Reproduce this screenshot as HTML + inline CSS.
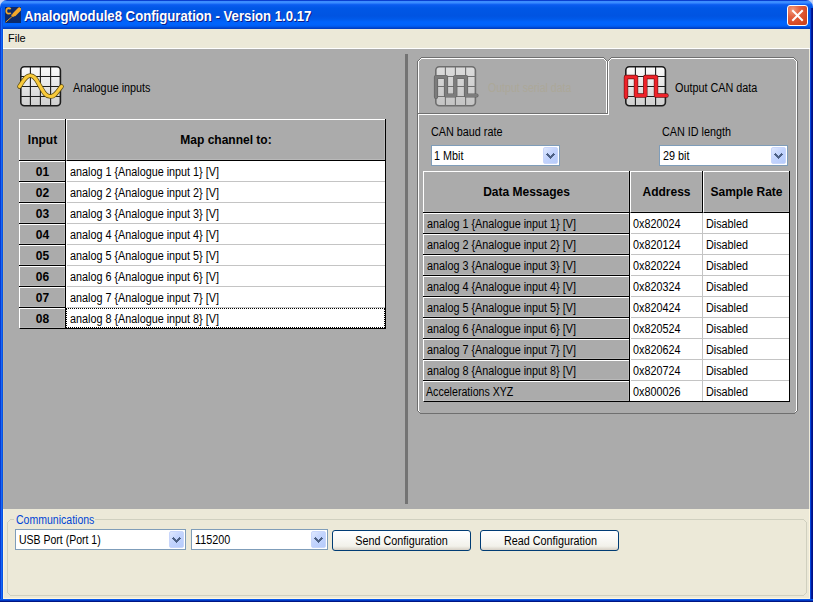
<!DOCTYPE html>
<html><head><meta charset="utf-8">
<style>
*{box-sizing:border-box}
html,body{margin:0;padding:0}
body{width:813px;height:602px;overflow:hidden;position:relative;background:#c6d3f7;font-family:"Liberation Sans",sans-serif;font-size:11px;color:#000}
.a{position:absolute}
.t{position:absolute;white-space:nowrap;line-height:13px;font-size:11px}
.b{font-weight:bold;font-size:12px}
.r{font-size:12px;transform:translateY(1px) scaleX(var(--sx,0.9));transform-origin:0 0}
.rc{font-size:12px;transform:translateY(1px) scaleX(var(--sx,0.9));transform-origin:50% 0;text-align:center}
#title{left:0;top:0;width:813px;height:29px;border-radius:7px 7px 0 0;
background:linear-gradient(to bottom,#0a3fd0 0px,#0a3fd0 1px,#3d8dff 1px,#3b8cff 3px,#1668f6 4px,#0b5cef 5px,#0057e6 8px,#0054e2 16px,#0059e9 19px,#0064fd 22px,#0063fb 25px,#0055e6 27px,#0040c4 28px,#0040c4 29px)}
#ttl{left:24px;top:8px;color:#fff;font-weight:bold;font-size:14px;line-height:16px;text-shadow:1px 1px 0 #0a1e8c;transform:scaleX(0.94);transform-origin:0 0}
.frL{left:0;top:8px;width:3px;height:594px;background:linear-gradient(to right,#0a3ad0 0,#0a3ad0 1px,#1668f6 1px,#1668f6 2px,#0853e2 2px)}
.frR{left:810px;top:8px;width:3px;height:594px;background:linear-gradient(to right,#0646dc 0,#0646dc 1px,#001c9c 1px,#001c9c 2px,#001088 2px)}
.frB{left:0;top:599px;width:813px;height:3px;background:linear-gradient(to bottom,#0858ec 0,#0858ec 1px,#0038c2 1px,#0038c2 2px,#001482 2px)}
#menu{left:3px;top:29px;width:807px;height:19px;background:#ece9d8;border-left:1px solid #fbf4dc}
#menuline{left:3px;top:48px;width:807px;height:1px;background:#fff}
#gray{left:3px;top:49px;width:807px;height:460px;background:#ababab}
#bottom{left:3px;top:509px;width:807px;height:90px;background:#ece9d8;border-left:1px solid #fbf4dc;border-right:1px solid #fff8e0;border-bottom:1px solid #fff8e0}
.hc{position:absolute;background:#ababab;border-top:1px solid #fff;border-left:1px solid #fff;border-right:1px solid #000;border-bottom:1px solid #000;box-shadow:inset -1px -1px 0 #b9b9b9}
.dc{position:absolute;background:#fff}
.gl{position:absolute;background:#c4c4c4}
.combo{position:absolute;height:21px;border:1px solid #7f9db9;background:#fff}
.cbtn{position:absolute;right:1px;top:1px;width:15px;height:17px;border-radius:2px;background:linear-gradient(135deg,#dfe8fe 0%,#c3d4fd 45%,#b6cbfb 100%);border:1px solid #c8d6fb}
.cbtn svg{position:absolute;left:-1px;top:-1px}
.btn{position:absolute;height:21px;border:1px solid #003c74;border-radius:3px;background:linear-gradient(to bottom,#fff 0%,#fbfbf9 30%,#f2f1ea 80%,#d6d0c5 100%)}
</style></head><body>


<div id="title" class="a"></div>
<div id="ttl" class="a">AnalogModule8 Configuration - Version 1.0.17</div>
<svg class="a" style="left:5px;top:7px" width="16" height="16" viewBox="0 0 16 16">
  <rect x="0" y="0" width="16" height="16" fill="#0c2a6b"/>
  <path d="M5.6 2.2 Q5 1.2 3.6 1.2 Q1.4 1.3 1.3 4 Q1.4 6.6 3.6 6.7 Q5 6.7 5.7 5.8" fill="none" stroke="#f6a92a" stroke-width="1.7"/>
  <path d="M14.3 2.3 L9.4 7.3" fill="none" stroke="#f6a92a" stroke-width="3.8" stroke-linecap="round"/>
  <path d="M6.6 7.6 L8.6 9.6" fill="none" stroke="#f6a92a" stroke-width="1.6"/>
  <path d="M8.2 8.6 L0.6 15.2" fill="none" stroke="#e89a20" stroke-width="1"/>
</svg>
<div class="a" style="left:787px;top:5px;width:21px;height:21px;border:1px solid #fff;border-radius:3px;background:radial-gradient(circle at 25% 20%,#f29a7b 0%,#e2603f 35%,#d64a22 70%,#c7401c 100%)"></div>
<svg class="a" style="left:787px;top:5px" width="21" height="21" viewBox="0 0 21 21">
  <path d="M6 6 L15 15 M15 6 L6 15" stroke="#fff" stroke-width="2" stroke-linecap="square"/>
</svg>
<div class="a frL"></div>
<div class="a frR"></div>
<div class="a frB"></div>
<div id="menu" class="a"></div>
<div id="menuline" class="a"></div>

<div class="t" style="left:8px;top:32px;">File</div>
<div id="gray" class="a"></div>
<div class="a" style="left:3px;top:49px;width:1px;height:460px;background:#b8b2a2"></div><div class="a" style="left:809px;top:49px;width:1px;height:460px;background:#ece9d8"></div>
<div class="a" style="left:405px;top:54px;width:3px;height:450px;background:#737373"></div>
<div id="bottom" class="a"></div>
<div class="hc" style="left:19px;top:119px;width:47px;height:42px"></div>
<div class="hc" style="left:66px;top:119px;width:320px;height:42px"></div>
<div class="t b" style="left:19px;top:134px;width:47px;text-align:center">Input</div>
<div class="t b" style="left:66px;top:134px;width:320px;text-align:center">Map channel to:</div>
<div class="dc" style="left:66px;top:161px;width:319px;height:167px"></div>
<div class="a" style="left:19px;top:328px;width:367px;height:1px;background:#000"></div>
<div class="a" style="left:385px;top:161px;width:1px;height:167px;background:#000"></div>
<div class="hc" style="left:19px;top:161px;width:47px;height:21px"></div>
<div class="t b" style="left:19px;top:166px;width:47px;text-align:center">01</div>
<div class="t r" style="left:70px;top:165px;">analog 1 {Analogue input 1} [V]</div>
<div class="hc" style="left:19px;top:182px;width:47px;height:21px"></div>
<div class="t b" style="left:19px;top:187px;width:47px;text-align:center">02</div>
<div class="gl" style="left:67px;top:181px;width:318px;height:1px"></div>
<div class="t r" style="left:70px;top:186px;">analog 2 {Analogue input 2} [V]</div>
<div class="hc" style="left:19px;top:203px;width:47px;height:21px"></div>
<div class="t b" style="left:19px;top:208px;width:47px;text-align:center">03</div>
<div class="gl" style="left:67px;top:202px;width:318px;height:1px"></div>
<div class="t r" style="left:70px;top:207px;">analog 3 {Analogue input 3} [V]</div>
<div class="hc" style="left:19px;top:224px;width:47px;height:21px"></div>
<div class="t b" style="left:19px;top:229px;width:47px;text-align:center">04</div>
<div class="gl" style="left:67px;top:223px;width:318px;height:1px"></div>
<div class="t r" style="left:70px;top:228px;">analog 4 {Analogue input 4} [V]</div>
<div class="hc" style="left:19px;top:245px;width:47px;height:21px"></div>
<div class="t b" style="left:19px;top:250px;width:47px;text-align:center">05</div>
<div class="gl" style="left:67px;top:244px;width:318px;height:1px"></div>
<div class="t r" style="left:70px;top:249px;">analog 5 {Analogue input 5} [V]</div>
<div class="hc" style="left:19px;top:266px;width:47px;height:21px"></div>
<div class="t b" style="left:19px;top:271px;width:47px;text-align:center">06</div>
<div class="gl" style="left:67px;top:265px;width:318px;height:1px"></div>
<div class="t r" style="left:70px;top:270px;">analog 6 {Analogue input 6} [V]</div>
<div class="hc" style="left:19px;top:287px;width:47px;height:21px"></div>
<div class="t b" style="left:19px;top:292px;width:47px;text-align:center">07</div>
<div class="gl" style="left:67px;top:286px;width:318px;height:1px"></div>
<div class="t r" style="left:70px;top:291px;">analog 7 {Analogue input 7} [V]</div>
<div class="hc" style="left:19px;top:308px;width:47px;height:21px"></div>
<div class="t b" style="left:19px;top:313px;width:47px;text-align:center">08</div>
<div class="gl" style="left:67px;top:307px;width:318px;height:1px"></div>
<div class="t r" style="left:70px;top:312px;">analog 8 {Analogue input 8} [V]</div>
<div class="a" style="left:66px;top:308px;width:319px;height:20px;border:1px dotted #000"></div>
<div class="a" style="left:65px;top:119px;width:1px;height:210px;background:#000"></div>
<div class="a" style="left:385px;top:119px;width:1px;height:210px;background:#000"></div>
<div class="a" style="left:19px;top:160px;width:47px;height:1px;background:#000"></div>
<div class="a" style="left:67px;top:160px;width:319px;height:1px;background:#000"></div>
<div class="a" style="left:19px;top:181px;width:47px;height:1px;background:#000"></div>
<div class="a" style="left:19px;top:202px;width:47px;height:1px;background:#000"></div>
<div class="a" style="left:19px;top:223px;width:47px;height:1px;background:#000"></div>
<div class="a" style="left:19px;top:244px;width:47px;height:1px;background:#000"></div>
<div class="a" style="left:19px;top:265px;width:47px;height:1px;background:#000"></div>
<div class="a" style="left:19px;top:286px;width:47px;height:1px;background:#000"></div>
<div class="a" style="left:19px;top:307px;width:47px;height:1px;background:#000"></div>

<svg class="a" style="left:0;top:0" width="813" height="602" viewBox="0 0 813 602" shape-rendering="crispEdges">
  <polyline points="417.5,113 417.5,61.5 421.5,57.5 603.5,57.5 607.5,61.5 607.5,114" fill="none" stroke="#6f6f6f" stroke-width="1"/>
  <polyline points="418.5,113 418.5,61.5 421.5,58.5 603.5,58.5 606.5,61.5 606.5,113" fill="none" stroke="#fff" stroke-width="1"/>
  <line x1="417" y1="113.5" x2="608" y2="113.5" stroke="#6f6f6f"/>
  <polyline points="607.5,114 607.5,61.5 611.5,57.5 793.5,57.5 797.5,61.5 797.5,410.5 794.5,413.5 420.5,413.5 417.5,410.5 417.5,113" fill="none" stroke="#6f6f6f" stroke-width="1"/>
  <polyline points="418.5,411 418.5,114.5 608.5,114.5 608.5,61.5 611.5,58.5 793.5,58.5 796.5,61.5 796.5,411" fill="none" stroke="#fff" stroke-width="1"/>
  <rect x="419" y="411" width="1" height="1" fill="#fff"/><rect x="795" y="411" width="1" height="1" fill="#fff"/>
</svg>
<svg class="a" style="left:0;top:0" width="813" height="602" viewBox="0 0 813 602">
  <defs>
    <linearGradient id="gfill" x1="0" y1="0" x2="0" y2="1">
      <stop offset="0" stop-color="#fbfbfb"/><stop offset="1" stop-color="#cfcfcf"/>
    </linearGradient>
    <linearGradient id="gfill2" x1="0" y1="0" x2="0" y2="1">
      <stop offset="0" stop-color="#dcdcdc"/><stop offset="1" stop-color="#c4c4c4"/>
    </linearGradient>
  </defs>
  <g transform="translate(20,66)">
    <rect x="0.8" y="0.8" width="39.6" height="39" rx="3.5" fill="url(#gfill)" stroke="#1c1c1c" stroke-width="1.6"/>
    <path d="M10.4 1 V40 M20.4 1 V40 M30.6 1 V40 M1 10.5 H41 M1 20.5 H41 M1 30.5 H41" stroke="#1c1c1c" stroke-width="1.1"/>
    <path d="M-0.5 20.5 C4 14 6 9.5 10.2 9.5 C15 9.5 17 15 20.3 20.5 C23.5 26 25.5 30.5 30.6 30.5 C35 30.5 37 26 41.5 20.5" fill="none" stroke="#5c4c12" stroke-width="4.6" stroke-linecap="round"/>
    <path d="M-0.5 20.5 C4 14 6 9.5 10.2 9.5 C15 9.5 17 15 20.3 20.5 C23.5 26 25.5 30.5 30.6 30.5 C35 30.5 37 26 41.5 20.5" fill="none" stroke="#f8c93a" stroke-width="3.2" stroke-linecap="round"/>
  </g>
  <g transform="translate(435,66)">
    <rect x="0.8" y="0.8" width="39.6" height="39" rx="3.5" fill="url(#gfill2)" stroke="#6e6e6e" stroke-width="1.6"/>
    <path d="M10.4 1 V40 M20.4 1 V40 M30.6 1 V40 M1 10.5 H41 M1 20.5 H41 M1 30.5 H41" stroke="#727272" stroke-width="1.1"/>
    <path d="M1 31 V11 H11 V29.5 H20.3 V11 H31 V29.5 H41.5" fill="none" stroke="#636363" stroke-width="4.2" stroke-linejoin="round" stroke-linecap="round"/>
    <path d="M1 31 V11 H11 V29.5 H20.3 V11 H31 V29.5 H41.5" fill="none" stroke="#7c7c7c" stroke-width="2.8" stroke-linejoin="round" stroke-linecap="round"/>
  </g>
  <g transform="translate(625,66)">
    <rect x="0.8" y="0.8" width="39.6" height="39" rx="3.5" fill="url(#gfill)" stroke="#1c1c1c" stroke-width="1.6"/>
    <path d="M10.4 1 V40 M20.4 1 V40 M30.6 1 V40 M1 10.5 H41 M1 20.5 H41 M1 30.5 H41" stroke="#1c1c1c" stroke-width="1.1"/>
    <path d="M1 31 V11 H11 V29.5 H20.3 V11 H31 V29.5 H41.5" fill="none" stroke="#6a1010" stroke-width="4.4" stroke-linejoin="round" stroke-linecap="round"/>
    <path d="M1 31 V11 H11 V29.5 H20.3 V11 H31 V29.5 H41.5" fill="none" stroke="#ee2229" stroke-width="3.2" stroke-linejoin="round" stroke-linecap="round"/>
  </g>
</svg>

<div class="t r" style="left:73px;top:81px;">Analogue inputs</div>
<div class="t r" style="left:488px;top:81px;color:#aca899;--sx:0.88">Output serial data</div>
<div class="t r" style="left:675px;top:81px;">Output CAN data</div>
<div class="t r" style="left:431px;top:125px;">CAN baud rate</div>
<div class="t r" style="left:662px;top:125px;">CAN ID length</div>
<div class="combo" style="left:431px;top:145px;width:129px"><div class="cbtn"><svg width="15" height="17" viewBox="0 0 15 17" shape-rendering="crispEdges"><path d="M4 6h1v1h-1zM10 6h1v1h-1zM3 7h3v1h-3zM9 7h3v1h-3zM4 8h3v1h-3zM8 8h3v1h-3zM5 9h5v1h-5zM6 10h3v1h-3zM7 11h1v1h-1z" fill="#4d6185"/></svg></div></div><div class="t r" style="left:434px;top:149px;">1 Mbit</div>
<div class="combo" style="left:659px;top:145px;width:129px"><div class="cbtn"><svg width="15" height="17" viewBox="0 0 15 17" shape-rendering="crispEdges"><path d="M4 6h1v1h-1zM10 6h1v1h-1zM3 7h3v1h-3zM9 7h3v1h-3zM4 8h3v1h-3zM8 8h3v1h-3zM5 9h5v1h-5zM6 10h3v1h-3zM7 11h1v1h-1z" fill="#4d6185"/></svg></div></div><div class="t r" style="left:663px;top:149px;">29 bit</div>
<div class="hc" style="left:423px;top:171px;width:207px;height:42px"></div>
<div class="t b" style="left:423px;top:186px;width:207px;text-align:center">Data Messages</div>
<div class="hc" style="left:630px;top:171px;width:73px;height:42px"></div>
<div class="t b" style="left:630px;top:186px;width:73px;text-align:center">Address</div>
<div class="hc" style="left:703px;top:171px;width:87px;height:42px"></div>
<div class="t b" style="left:703px;top:186px;width:87px;text-align:center">Sample Rate</div>
<div class="dc" style="left:630px;top:213px;width:159px;height:188px"></div>
<div class="gl" style="left:702px;top:213px;width:1px;height:188px"></div>
<div class="a" style="left:423px;top:401px;width:367px;height:1px;background:#000"></div>
<div class="a" style="left:789px;top:213px;width:1px;height:188px;background:#000"></div>
<div class="hc" style="left:423px;top:213px;width:207px;height:21px"></div>
<div class="t r" style="left:427px;top:217px;">analog 1 {Analogue input 1} [V]</div>
<div class="t r" style="left:633px;top:217px;">0x820024</div>
<div class="t r" style="left:706px;top:217px;">Disabled</div>
<div class="hc" style="left:423px;top:234px;width:207px;height:21px"></div>
<div class="t r" style="left:427px;top:238px;">analog 2 {Analogue input 2} [V]</div>
<div class="gl" style="left:631px;top:233px;width:158px;height:1px"></div>
<div class="t r" style="left:633px;top:238px;">0x820124</div>
<div class="t r" style="left:706px;top:238px;">Disabled</div>
<div class="hc" style="left:423px;top:255px;width:207px;height:21px"></div>
<div class="t r" style="left:427px;top:259px;">analog 3 {Analogue input 3} [V]</div>
<div class="gl" style="left:631px;top:254px;width:158px;height:1px"></div>
<div class="t r" style="left:633px;top:259px;">0x820224</div>
<div class="t r" style="left:706px;top:259px;">Disabled</div>
<div class="hc" style="left:423px;top:276px;width:207px;height:21px"></div>
<div class="t r" style="left:427px;top:280px;">analog 4 {Analogue input 4} [V]</div>
<div class="gl" style="left:631px;top:275px;width:158px;height:1px"></div>
<div class="t r" style="left:633px;top:280px;">0x820324</div>
<div class="t r" style="left:706px;top:280px;">Disabled</div>
<div class="hc" style="left:423px;top:297px;width:207px;height:21px"></div>
<div class="t r" style="left:427px;top:301px;">analog 5 {Analogue input 5} [V]</div>
<div class="gl" style="left:631px;top:296px;width:158px;height:1px"></div>
<div class="t r" style="left:633px;top:301px;">0x820424</div>
<div class="t r" style="left:706px;top:301px;">Disabled</div>
<div class="hc" style="left:423px;top:318px;width:207px;height:21px"></div>
<div class="t r" style="left:427px;top:322px;">analog 6 {Analogue input 6} [V]</div>
<div class="gl" style="left:631px;top:317px;width:158px;height:1px"></div>
<div class="t r" style="left:633px;top:322px;">0x820524</div>
<div class="t r" style="left:706px;top:322px;">Disabled</div>
<div class="hc" style="left:423px;top:339px;width:207px;height:21px"></div>
<div class="t r" style="left:427px;top:343px;">analog 7 {Analogue input 7} [V]</div>
<div class="gl" style="left:631px;top:338px;width:158px;height:1px"></div>
<div class="t r" style="left:633px;top:343px;">0x820624</div>
<div class="t r" style="left:706px;top:343px;">Disabled</div>
<div class="hc" style="left:423px;top:360px;width:207px;height:21px"></div>
<div class="t r" style="left:427px;top:364px;">analog 8 {Analogue input 8} [V]</div>
<div class="gl" style="left:631px;top:359px;width:158px;height:1px"></div>
<div class="t r" style="left:633px;top:364px;">0x820724</div>
<div class="t r" style="left:706px;top:364px;">Disabled</div>
<div class="hc" style="left:423px;top:381px;width:207px;height:21px"></div>
<div class="t r" style="left:426px;top:385px;--sx:0.885">Accelerations XYZ</div>
<div class="gl" style="left:631px;top:380px;width:158px;height:1px"></div>
<div class="t r" style="left:633px;top:385px;">0x800026</div>
<div class="t r" style="left:706px;top:385px;">Disabled</div>
<div class="a" style="left:629px;top:171px;width:1px;height:231px;background:#000"></div>
<div class="a" style="left:702px;top:171px;width:1px;height:42px;background:#000"></div>
<div class="a" style="left:789px;top:171px;width:1px;height:231px;background:#000"></div>
<div class="a" style="left:423px;top:212px;width:207px;height:1px;background:#000"></div>
<div class="a" style="left:631px;top:212px;width:72px;height:1px;background:#000"></div>
<div class="a" style="left:704px;top:212px;width:86px;height:1px;background:#000"></div>
<div class="a" style="left:423px;top:233px;width:207px;height:1px;background:#000"></div>
<div class="a" style="left:423px;top:254px;width:207px;height:1px;background:#000"></div>
<div class="a" style="left:423px;top:275px;width:207px;height:1px;background:#000"></div>
<div class="a" style="left:423px;top:296px;width:207px;height:1px;background:#000"></div>
<div class="a" style="left:423px;top:317px;width:207px;height:1px;background:#000"></div>
<div class="a" style="left:423px;top:338px;width:207px;height:1px;background:#000"></div>
<div class="a" style="left:423px;top:359px;width:207px;height:1px;background:#000"></div>
<div class="a" style="left:423px;top:380px;width:207px;height:1px;background:#000"></div>
<svg class="a" style="left:0;top:0" width="813" height="602" viewBox="0 0 813 602" shape-rendering="crispEdges"><polyline points="14,519.5 10.5,519.5 7.5,522.5 7.5,592.5 10.5,595.5 803.5,595.5 806.5,592.5 806.5,522.5 803.5,519.5 95,519.5" fill="none" stroke="#d0d0bf"/></svg>
<div class="t r" style="left:16px;top:513px;color:#0046d5;--sx:0.877">Communications</div>
<div class="combo" style="left:15px;top:529px;width:171px"><div class="cbtn"><svg width="15" height="17" viewBox="0 0 15 17" shape-rendering="crispEdges"><path d="M4 6h1v1h-1zM10 6h1v1h-1zM3 7h3v1h-3zM9 7h3v1h-3zM4 8h3v1h-3zM8 8h3v1h-3zM5 9h5v1h-5zM6 10h3v1h-3zM7 11h1v1h-1z" fill="#4d6185"/></svg></div></div><div class="t r" style="left:19px;--sx:0.875;top:533px;">USB Port (Port 1)</div>
<div class="combo" style="left:191px;top:529px;width:137px"><div class="cbtn"><svg width="15" height="17" viewBox="0 0 15 17" shape-rendering="crispEdges"><path d="M4 6h1v1h-1zM10 6h1v1h-1zM3 7h3v1h-3zM9 7h3v1h-3zM4 8h3v1h-3zM8 8h3v1h-3zM5 9h5v1h-5zM6 10h3v1h-3zM7 11h1v1h-1z" fill="#4d6185"/></svg></div></div><div class="t r" style="left:195px;top:533px;">115200</div>
<div class="btn" style="left:332px;top:530px;width:139px"></div>
<div class="t rc" style="left:332px;top:534px;width:139px">Send Configuration</div>
<div class="btn" style="left:480px;top:530px;width:139px"></div>
<div class="t rc" style="left:481px;top:534px;width:139px">Read Configuration</div>
</body></html>
